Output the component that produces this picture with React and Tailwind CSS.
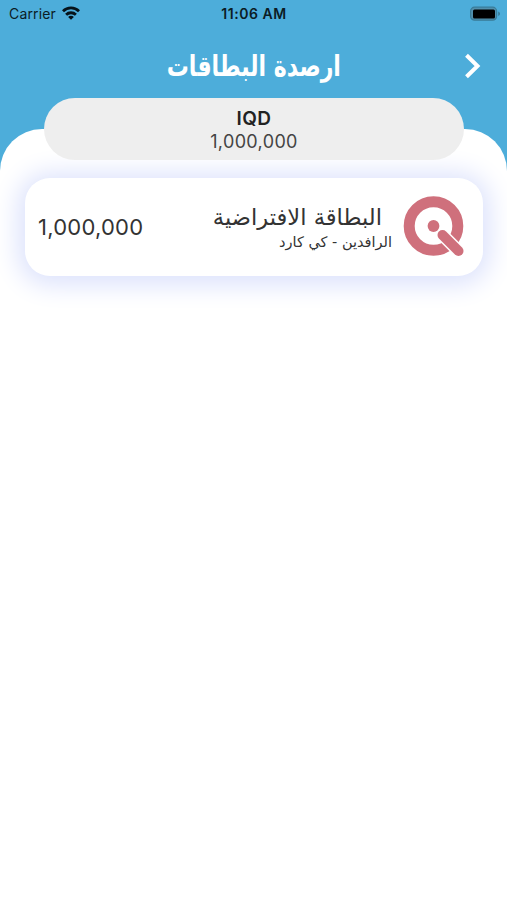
import React from "react";

function StatusBar() {
  return (
    <div className="grid h-7 grid-cols-3 items-center pl-[9px] pr-[6px] text-[#0b1c25]">
      <div className="flex items-center gap-[6px]">
        <span className="text-[14px] leading-none tracking-[0.15px]">Carrier</span>
        <svg className="-mt-[2px]" width="18" height="14" viewBox="0 0 18 14" fill="none" stroke="#06131a" strokeWidth="2.800">
          <path d="M1 5.200C5.500 .8 12.500 .8 17 5.200" />
          <path d="M4.100 8.700C6.800 6.100 11.200 6.100 13.900 8.700" />
          <path d="M9 13.800L6.100 10.900C7.700 9.400 10.300 9.400 11.900 10.900Z" fill="#06131a" stroke="none" />
        </svg>
      </div>
      <span className="-ml-[2px] text-center text-[14px] font-semibold leading-none tracking-[0.55px]">11:06 AM</span>
      <svg className="-mt-[1px] justify-self-end" width="31" height="16" viewBox="0 0 31 16">
        <rect x="0.600" y="1.200" width="26" height="13" rx="4" fill="#5290ad" stroke="#397c99" strokeWidth="1.200" />
        <rect x="3" y="3.400" width="22" height="9" rx="1.500" fill="#000" />
        <path d="M28.200 5.500C30.600 6.500 30.600 9 28.200 10Z" fill="#397c99" />
      </svg>
    </div>
  );
}

function Header() {
  return (
    <header className="grid h-[70px] grid-cols-[1fr_auto_1fr] items-center">
      <span />
      <h1 dir="rtl" className="mt-[4px] ml-[1px] origin-center scale-x-[0.815] scale-y-[1.08] whitespace-nowrap font-['DejaVu_Sans',sans-serif] text-[27px] font-bold leading-none text-white">
        ارصدة البطاقات
      </h1>
      <svg className="mr-[25px] mt-[5px] justify-self-end" width="18" height="26" viewBox="0 0 18 26" fill="none" stroke="white" strokeWidth="4">
        <path d="M2.500 2.200L13.500 13L2.500 23.800" />
      </svg>
    </header>
  );
}

function CardLogo() {
  return (
    <svg width="62" height="62" viewBox="0 0 62 62" fill="none" className="-mt-[2px] shrink-0">
      <circle cx="30.500" cy="31" r="24.300" stroke="#cf707c" strokeWidth="11" />
      <circle cx="30.500" cy="31" r="5.900" fill="#cf707c" />
      <path d="M39.500 40L55.500 56" stroke="white" strokeWidth="13" strokeLinecap="round" />
      <path d="M39.500 40L55.500 56" stroke="#cf707c" strokeWidth="10" strokeLinecap="round" />
    </svg>
  );
}

export default function App() {
  return (
    <div className="flex h-[900px] w-[507px] flex-col overflow-hidden bg-[#4dadda] font-['Inter',sans-serif]">
      <StatusBar />
      <Header />
      <section className="relative z-10 ml-[44px] h-[62px] w-[420px] shrink-0 rounded-[31px] bg-[#eeeeee] pt-[9px] text-center text-[#222]">
        <div className="text-[19px] font-semibold leading-[23px] tracking-[0.5px]">IQD</div>
        <div className="text-[18px] leading-[23px] tracking-[0.35px] text-[#444]">1,000,000</div>
      </section>
      <main className="-mt-[31px] flex-1 rounded-t-[42px] bg-white px-[25px] pt-[49px]">
        <article className="mr-[-1px] flex h-[98px] items-center rounded-[25px] bg-white pl-[13px] pr-[18px] shadow-[0_2px_26px_7px_#dce2fc]">
          <span className="text-[22px] tracking-[0.23px] text-[#333]">1,000,000</span>
          <div dir="rtl" className="mr-[11px] ml-auto mt-[2px] flex flex-col whitespace-nowrap font-['DejaVu_Sans',sans-serif] text-[#333]">
            <span className="mr-[10px] text-[22.6px] leading-[28px]">البطاقة الافتراضية</span>
            <span className="text-[14.5px] leading-[22px]">الرافدين - كي كارد</span>
          </div>
          <CardLogo />
        </article>
      </main>
    </div>
  );
}
